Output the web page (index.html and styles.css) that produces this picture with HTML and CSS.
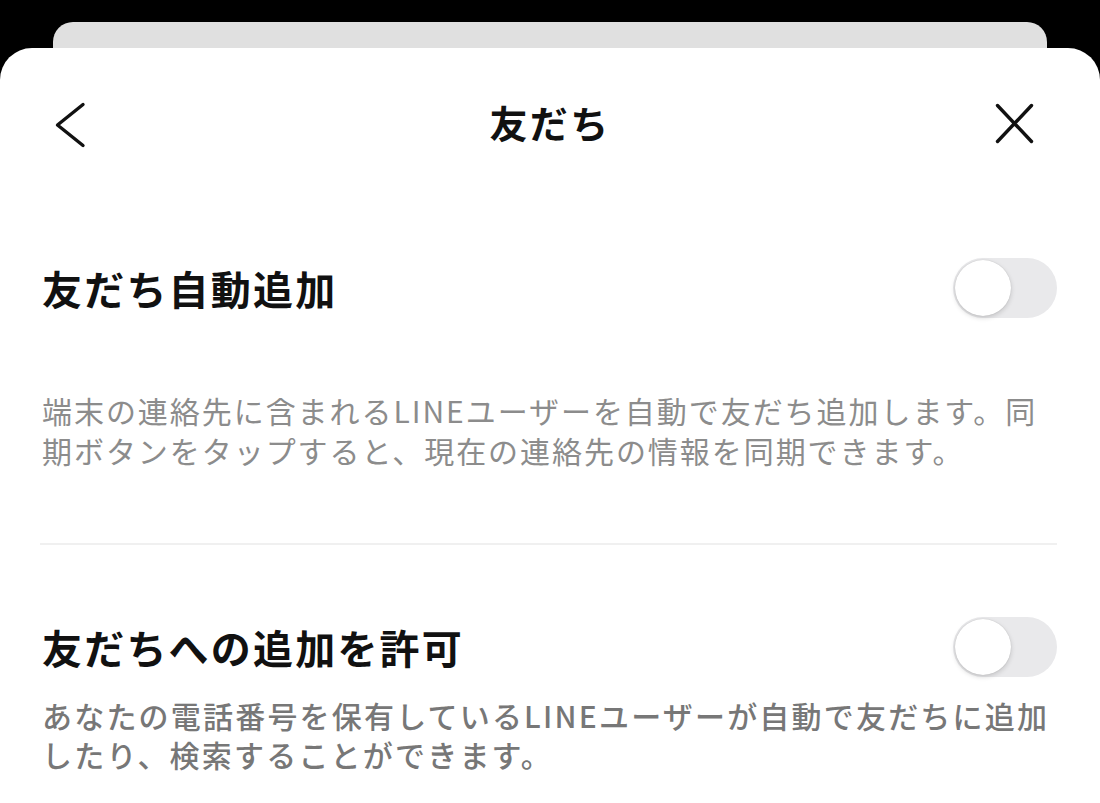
FILE: index.html
```html
<!DOCTYPE html>
<html lang="ja">
<head>
<meta charset="utf-8">
<title>友だち</title>
<link rel="stylesheet" href="styles.css">
</head>
<body>
<div class="screen">
  <div class="backcard"></div>
  <div class="sheet">
    <header class="nav">
      <svg class="nav-back" viewBox="0 0 48 48" width="48" height="48" aria-label="戻る">
        <path d="M33 3.5 L7.5 24 L33 44.5" fill="none" stroke="#111" stroke-width="3.4" stroke-linecap="round" stroke-linejoin="round"/>
      </svg>
      <h1 class="nav-title">友だち</h1>
      <svg class="nav-close" viewBox="0 0 60 48" width="60" height="48" aria-label="閉じる">
        <path d="M7.5 4.5 L41.5 40.5 M41.5 4.5 L7.5 40.5" fill="none" stroke="#111" stroke-width="3.4" stroke-linecap="round"/>
      </svg>
    </header>

    <section class="setting setting-first">
      <div class="setting-row">
        <h2 class="setting-title">友だち自動追加</h2>
        <div class="toggle"><span class="knob"></span></div>
      </div>
      <p class="desc desc-light">端末の連絡先に含まれるLINEユーザーを自動で友だち追加します。同期ボタンをタップすると、現在の連絡先の情報を同期できます。</p>
    </section>

    <div class="divider"></div>

    <section class="setting setting-second">
      <div class="setting-row">
        <h2 class="setting-title">友だちへの追加を許可</h2>
        <div class="toggle"><span class="knob"></span></div>
      </div>
      <p class="desc desc-dark">あなたの電話番号を保有しているLINEユーザーが自動で友だちに追加したり、検索することができます。</p>
    </section>
  </div>
</div>
</body>
</html>
```

FILE: styles.css
```css
html, body {
  margin: 0;
  padding: 0;
  background: #000;
}

.screen {
  width: 1100px;
  height: 803px;
  overflow: hidden;
  display: flex;
  flex-direction: column;
  padding-top: 22px;
  box-sizing: border-box;
  font-family: "Noto Sans CJK JP", "Noto Sans", sans-serif;
}

.backcard {
  height: 26px;
  margin: 0 53px;
  background: #e0e0e0;
  border-radius: 20px 20px 0 0;
  flex: none;
}

.sheet {
  flex: 1;
  background: #fff;
  border-radius: 32px 32px 0 0;
  display: flex;
  flex-direction: column;
}

.nav {
  height: 154px;
  display: grid;
  grid-template-columns: 1fr auto 1fr;
  align-items: center;
  padding: 0 50px;
  flex: none;
}

.nav-back {
  justify-self: start;
  display: block;
}

.nav-close {
  justify-self: end;
  display: block;
}

.nav-title {
  margin: 0;
  padding-bottom: 6px;
  font-size: 38px;
  font-weight: 700;
  letter-spacing: 2.4px;
  color: #111;
  line-height: 1;
}

.setting {
  padding: 0 43px 0 42px;
}

.setting-first {
  padding-top: 56px;
}

.setting-second {
  padding-top: 72px;
}

.setting-row {
  display: flex;
  align-items: center;
  justify-content: space-between;
  height: 60px;
}

.setting-title {
  margin: 0;
  font-size: 40px;
  font-weight: 700;
  letter-spacing: 2.2px;
  color: #111;
  line-height: 1;
}

.toggle {
  width: 104px;
  height: 60px;
  box-sizing: border-box;
  padding: 2px;
  border-radius: 30px;
  background: #e9e9eb;
  display: flex;
  align-items: center;
  flex: none;
}

.knob {
  width: 56px;
  height: 56px;
  border-radius: 50%;
  background: #fff;
  box-shadow: 0 2px 5px rgba(0, 0, 0, 0.16), 0 0 1px rgba(0, 0, 0, 0.2);
}

.desc {
  margin: 0;
  font-size: 30px;
  line-height: 40px;
}

.desc-light {
  margin-top: 72px;
  color: #8c8c8c;
  font-weight: 400;
  letter-spacing: 1.95px;
}

.desc-dark {
  margin-top: 19px;
  line-height: 39px;
  color: #777;
  font-weight: 500;
  letter-spacing: 2.2px;
}

.divider {
  height: 2px;
  background: #f0f0f0;
  margin: 73px 43px 0 40px;
  flex: none;
}
```
